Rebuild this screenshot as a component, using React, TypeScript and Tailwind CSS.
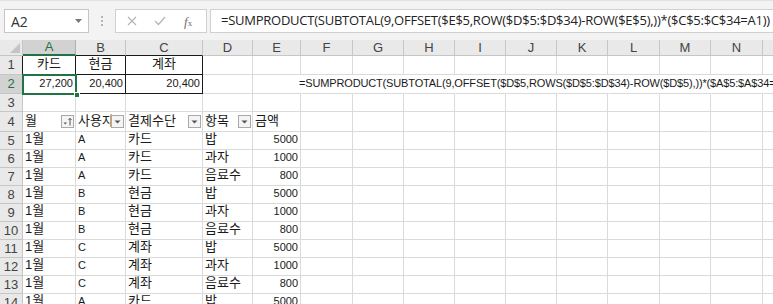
import React from 'react';
import clsx from 'clsx';

const colW = [
  'w-[53px]', 'w-[50px]', 'w-[77px]', 'w-[50px]', 'w-[48px]', 'w-[52px]', 'w-[51px]', 'w-[51px]',
  'w-[51px]', 'w-[51px]', 'w-[51px]', 'w-[52px]', 'w-[51px]', 'w-[52px]', 'w-[40px]',
];
const colNames = ['A', 'B', 'C', 'D', 'E', 'F', 'G', 'H', 'I', 'J', 'K', 'L', 'M', 'N', 'O'];

const data = [
  ['1월', 'A', '카드', '밥', '5000'],
  ['1월', 'A', '카드', '과자', '1000'],
  ['1월', 'A', '카드', '음료수', '800'],
  ['1월', 'B', '현금', '밥', '5000'],
  ['1월', 'B', '현금', '과자', '1000'],
  ['1월', 'B', '현금', '음료수', '800'],
  ['1월', 'C', '계좌', '밥', '5000'],
  ['1월', 'C', '계좌', '과자', '1000'],
  ['1월', 'C', '계좌', '음료수', '800'],
  ['1월', 'A', '카드', '밥', '5000'],
];

const grid = 'border-[#dadada]';

function RowHead({ n, h, selected }: { n: number; h: string; selected?: boolean }) {
  return (
    <div
      className={clsx(
        'w-[23px] shrink-0 flex items-center justify-center border-r border-b text-[13px]',
        h,
        selected ? 'bg-[#d2d2d2] text-[#217346] border-r-[#8c8c8c] border-b-[#c6c6c6]' : 'bg-[#e9e9e9] text-[#444] border-[#c6c6c6]',
        (n === 1 || n === 2) && 'border-r-[#1a1a1a]'
      )}
    >
      {n}
    </div>
  );
}

function Cell({
  i,
  children,
  className,
}: {
  i: number;
  children?: React.ReactNode;
  className?: string;
}) {
  return (
    <div
      className={clsx(
        'shrink-0 h-full border-r border-b flex items-end overflow-hidden whitespace-nowrap px-[2px] pb-[1px]',
        grid,
        colW[i],
        className
      )}
    >
      {children}
    </div>
  );
}

function FilterBtn({ sort }: { sort?: boolean }) {
  return (
    <div className="absolute right-[1px] bottom-[3px] w-[13px] h-[13px] bg-[#f4f4f4] border border-[#a9a9a9] flex items-center justify-center">
      {sort ? (
        <svg width="11" height="11" viewBox="0 0 11 11">
          <path d="M1.5 6.5 L5 6.5 L3.25 8.5 Z" fill="#555" />
          <path d="M8 9.5 L8 2.5 M6.5 4 L8 2.3 L9.5 4" stroke="#555" strokeWidth="1" fill="none" />
        </svg>
      ) : (
        <svg width="9" height="9" viewBox="0 0 9 9">
          <path d="M1.5 3.5 L7.5 3.5 L4.5 6.5 Z" fill="#555" />
        </svg>
      )}
    </div>
  );
}

export default function App() {
  const rowH = 'h-[18px]';
  return (
    <div className="w-[773px] h-[304px] overflow-hidden bg-white font-['Liberation_Sans','Noto_Sans_CJK_KR',sans-serif] text-[#1a1a1a] relative">
      {/* formula bar */}
      <div className="h-[40px] bg-[#f3f3f3] border-t border-[#e2e2e2] flex items-start pt-[8px] pl-[4px]">
        <div className="w-[85px] h-[24px] bg-white border border-[#c6c6c6] flex items-center justify-between pl-[6px] pr-[6px]">
          <span className="text-[14px] text-[#333] font-['Open_Sans',sans-serif]">A2</span>
          <svg width="7" height="4" viewBox="0 0 7 4">
            <path d="M0 0 L7 0 L3.5 4 Z" fill="#777" />
          </svg>
        </div>
        <div className="w-[26px] h-[24px] flex flex-col items-center justify-center gap-[2px]">
          <span className="w-[2px] h-[2px] bg-[#b5b5b5]" />
          <span className="w-[2px] h-[2px] bg-[#b5b5b5]" />
          <span className="w-[2px] h-[2px] bg-[#b5b5b5]" />
        </div>
        <div className="w-[92px] h-[24px] bg-white border border-[#d0d0d0] flex items-center pl-[11px]">
          <svg width="10" height="10" viewBox="0 0 10 10" className="shrink-0">
            <path d="M1 1 L9 9 M9 1 L1 9" stroke="#b5b5b5" strokeWidth="1.2" />
          </svg>
          <svg width="12" height="10" viewBox="0 0 12 10" className="ml-[17px] shrink-0">
            <path d="M1 5 L4.5 8.5 L11 1" stroke="#b5b5b5" strokeWidth="1.3" fill="none" />
          </svg>
          <span className="ml-[18px] text-[13px] italic text-[#707070] font-['Liberation_Serif',serif] leading-none">
            f<span className="text-[9px] not-italic">x</span>
          </span>
        </div>
        <div className="ml-[3px] flex-1 h-[24px] bg-white border border-[#d0d0d0] border-r-0 flex items-center pl-[10px] whitespace-nowrap overflow-hidden">
          <span className="text-[13px] text-[#222] font-['Open_Sans',sans-serif] tracking-[-0.25px]">
            =SUMPRODUCT(SUBTOTAL(9,OFFSET($E$5,ROW($D$5:$D$34)-ROW($E$5),))*($C$5:$C$34=A1))
          </span>
        </div>
      </div>

      {/* sheet */}
      <div className="relative">
        {/* column header */}
        <div className="flex h-[16px]">
          <div className="w-[23px] shrink-0 bg-[#e9e9e9] border-r border-b border-[#c6c6c6] relative">
            <svg width="10" height="10" viewBox="0 0 10 10" className="absolute right-[2px] bottom-[2px]">
              <path d="M10 0 L10 10 L0 10 Z" fill="#c4c4c4" />
            </svg>
          </div>
          {colNames.map((c, i) => (
            <div
              key={c}
              className={clsx(
                'shrink-0 h-full flex items-center justify-center text-[13px] border-r',
                colW[i],
                i === 0
                  ? 'bg-[#d2d2d2] text-[#217346] border-b-2 border-b-[#217346] border-r-[#b0b0b0]'
                  : 'bg-[#e9e9e9] text-[#444] border-b border-[#c6c6c6]',
                (i === 1 || i === 2) && 'border-b-[#1a1a1a]'
              )}
            >
              {c}
            </div>
          ))}
        </div>

        {/* row 1 */}
        <div className="flex h-[19px]">
          <RowHead n={1} h="h-[19px]" />
          {['카드', '현금', '계좌'].map((t, i) => (
            <Cell key={i} i={i} className="justify-center text-[13px] border-r-[#1a1a1a] border-b-[#1a1a1a]">
              {t}
            </Cell>
          ))}
          {colNames.slice(3).map((c, j) => (
            <Cell key={c} i={j + 3} />
          ))}
        </div>

        {/* row 2 */}
        <div className="flex h-[19px]">
          <RowHead n={2} h="h-[19px]" selected />
          {['27,200', '20,400', '20,400'].map((t, i) => (
            <Cell key={i} i={i} className="justify-end text-[11px] pb-[2px] border-r-[#1a1a1a] border-b-[#1a1a1a]">
              {t}
            </Cell>
          ))}
          <Cell i={3} />
          <Cell i={4} className="overflow-visible border-r-transparent pl-[46px] text-[11px] tracking-[-0.15px] pb-[2px]">
            =SUMPRODUCT(SUBTOTAL(9,OFFSET($D$5,ROWS($D$5:$D$34)-ROW($D$5),))*($A$5:$A$34=A1))
          </Cell>
          {colNames.slice(5).map((c, j) => (
            <Cell key={c} i={j + 5} className="border-r-transparent" />
          ))}
        </div>

        {/* row 3 */}
        <div className="flex h-[18px]">
          <RowHead n={3} h="h-[18px]" />
          {colNames.map((c, i) => (
            <Cell key={c} i={i} />
          ))}
        </div>

        {/* row 4 */}
        <div className="flex h-[20px]">
          <RowHead n={4} h="h-[20px]" />
          {['월', '사용자', '결제수단', '항목', '금액'].map((t, i) => (
            <Cell key={i} i={i} className="relative text-[13px]">
              {t}
              {i < 4 && <FilterBtn sort={i === 0} />}
            </Cell>
          ))}
          {colNames.slice(5).map((c, j) => (
            <Cell key={c} i={j + 5} />
          ))}
        </div>

        {/* data */}
        {data.map((r, k) => (
          <div key={k} className={clsx('flex', rowH)}>
            <RowHead n={k + 5} h={rowH} />
            {r.map((t, i) => (
              <Cell
                key={i}
                i={i}
                className={clsx(
                  i === 1 || i === 4 ? 'text-[11px] pb-[2px]' : 'text-[13px]',
                  i === 4 && 'justify-end'
                )}
              >
                {t}
              </Cell>
            ))}
            {colNames.slice(5).map((c, j) => (
              <Cell key={c} i={j + 5} />
            ))}
          </div>
        ))}

        {/* selection A2 */}
        <div className="absolute left-[22px] top-[34px] w-[55px] h-[21px] border-2 border-[#217346] pointer-events-none" />
        <div className="absolute left-[74px] top-[52px] w-[6px] h-[6px] bg-[#217346] border border-white pointer-events-none" />
      </div>
    </div>
  );
}
